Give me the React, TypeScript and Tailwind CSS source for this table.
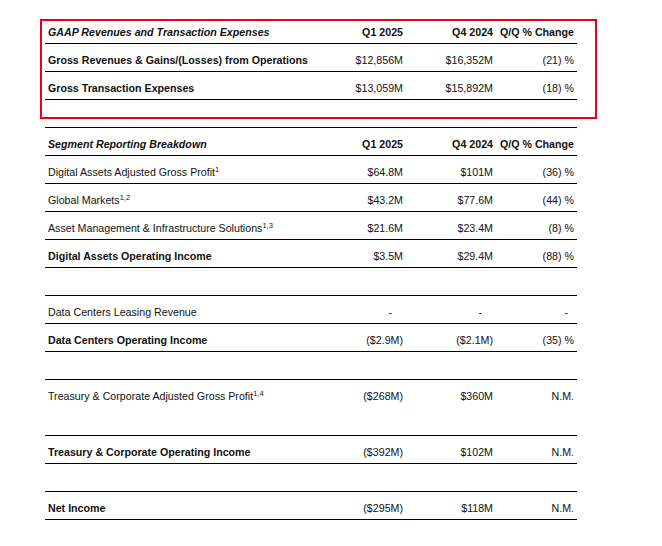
import React from "react";

type Row = {
  label?: React.ReactNode;
  q1?: string;
  q4?: string;
  qq?: string;
  kind?: "header" | "bold" | "normal" | "spacer";
  border?: boolean;
  dash?: boolean;
};

const Sup = ({ children }: { children: React.ReactNode }) => (
  <span className="relative -top-[4px] text-[7.5px] leading-none">{children}</span>
);

const rows: Row[] = [
  { label: "GAAP Revenues and Transaction Expenses", q1: "Q1 2025", q4: "Q4 2024", qq: "Q/Q % Change", kind: "header" },
  { label: "Gross Revenues & Gains/(Losses) from Operations", q1: "$12,856M", q4: "$16,352M", qq: "(21) %", kind: "bold" },
  { label: "Gross Transaction Expenses", q1: "$13,059M", q4: "$15,892M", qq: "(18) %", kind: "bold" },
  { kind: "spacer" },
  { label: "Segment Reporting Breakdown", q1: "Q1 2025", q4: "Q4 2024", qq: "Q/Q % Change", kind: "header" },
  { label: <>Digital Assets Adjusted Gross Profit<Sup>1</Sup></>, q1: "$64.8M", q4: "$101M", qq: "(36) %" },
  { label: <>Global Markets<Sup>1,2</Sup></>, q1: "$43.2M", q4: "$77.6M", qq: "(44) %" },
  { label: <>Asset Management &amp; Infrastructure Solutions<Sup>1,3</Sup></>, q1: "$21.6M", q4: "$23.4M", qq: "(8) %" },
  { label: "Digital Assets Operating Income", q1: "$3.5M", q4: "$29.4M", qq: "(88) %", kind: "bold" },
  { kind: "spacer" },
  { label: "Data Centers Leasing Revenue", q1: "-", q4: "-", qq: "-", dash: true },
  { label: "Data Centers Operating Income", q1: "($2.9M)", q4: "($2.1M)", qq: "(35) %", kind: "bold" },
  { kind: "spacer" },
  { label: <>Treasury &amp; Corporate Adjusted Gross Profit<Sup>1,4</Sup></>, q1: "($268M)", q4: "$360M", qq: "N.M.", border: false },
  { kind: "spacer" },
  { label: "Treasury & Corporate Operating Income", q1: "($392M)", q4: "$102M", qq: "N.M.", kind: "bold" },
  { kind: "spacer" },
  { label: "Net Income", q1: "($295M)", q4: "$118M", qq: "N.M.", kind: "bold" },
];

export default function App() {
  return (
    <div
      className="relative w-[662px] h-[546px] bg-white text-[#111] text-[10.67px]"
      style={{ fontFamily: '"Liberation Sans", Arial, sans-serif' }}
    >
      <div className="pl-[45px] pt-[16px]">
        <div className="w-[532px]">
          {rows.map((r, i) => {
            const kind = r.kind ?? "normal";
            const hasBorder = r.border ?? true;
            if (kind === "spacer") {
              return <div key={i} className="h-[28px] border-b border-black" />;
            }
            const hdr = kind === "header";
            const cls = [
              "grid grid-cols-[288px_70px_90px_81px] h-[28px] pt-[10px] leading-[13px] box-border",
              hasBorder ? "border-b border-black" : "",
            ].join(" ");
            const labelCls = hdr ? "font-bold italic" : kind === "bold" ? "font-bold" : "";
            const numCls = hdr ? "font-bold" : "";
            return (
              <div key={i} className={cls}>
                <div className={`pl-[3px] whitespace-nowrap ${labelCls}`}>{r.label}</div>
                <div className={`text-right whitespace-nowrap ${numCls} ${r.dash ? "pr-[11px]" : ""}`}>{r.q1}</div>
                <div className={`text-right whitespace-nowrap ${numCls} ${r.dash ? "pr-[11px]" : ""}`}>{r.q4}</div>
                <div className={`text-right whitespace-nowrap ${numCls} ${r.dash ? "pr-[6px]" : ""}`}>{r.qq}</div>
              </div>
            );
          })}
        </div>
      </div>
      <div className="absolute left-[40px] top-[19px] w-[557px] h-[100px] border-2 border-[#e8001c]" />
    </div>
  );
}
